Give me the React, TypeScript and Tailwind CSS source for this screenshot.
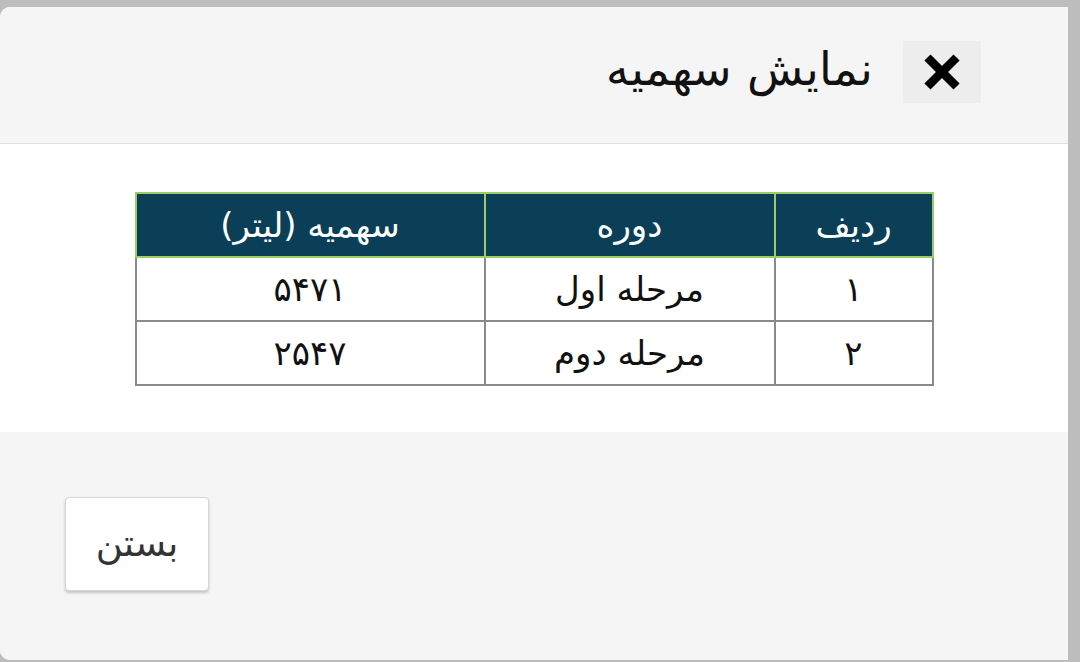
import { X } from "lucide-react";

const rows = [
  { id: "۱", period: "مرحله اول", quota: "۵۴۷۱" },
  { id: "۲", period: "مرحله دوم", quota: "۲۵۴۷" },
];

const font = { fontFamily: '"DejaVu Sans", "Noto Sans", sans-serif' };

export default function App() {
  return (
    <div
      dir="rtl"
      className="h-[662px] w-[1080px] bg-[#bdbdbd] pt-[7px] pr-[12px] pb-[2px]"
      style={font}
    >
      <div className="flex h-full flex-col overflow-hidden rounded-l-[10px] bg-white">
        {/* Header */}
        <div className="flex h-[137px] shrink-0 items-center gap-[30px] border-b border-[#e0e0e0] bg-[#f5f5f5] pr-[87px] pb-[6px]">
          <button className="flex h-[62px] w-[78px] items-center justify-center bg-[#ededed]">
            <X size={46} strokeWidth={4.5} strokeLinecap="square" className="text-black" />
          </button>
          <h1 className="pb-[6px] text-[46px] leading-none font-light text-[#111]">نمایش سهمیه</h1>
        </div>

        {/* Body */}
        <div className="flex h-[288px] shrink-0 justify-center bg-white pt-[48px]">
          <table className="h-[192px] w-[799px] border-collapse text-[34px] text-[#111]">
            <thead>
              <tr className="h-[64px] bg-[#0a3f57] text-white">
                <th className="w-[158px] border-2 border-[#9ccc65] font-normal">ردیف</th>
                <th className="w-[290px] border-2 border-[#9ccc65] font-normal">دوره</th>
                <th className="border-2 border-[#9ccc65] font-normal">سهمیه (لیتر)</th>
              </tr>
            </thead>
            <tbody>
              {rows.map((r) => (
                <tr key={r.id} className="h-[64px]">
                  <td className="border-2 border-[#8a8a8a] text-center">{r.id}</td>
                  <td className="border-2 border-[#8a8a8a] text-center">{r.period}</td>
                  <td className="border-2 border-[#8a8a8a] text-center">{r.quota}</td>
                </tr>
              ))}
            </tbody>
          </table>
        </div>

        {/* Footer */}
        <div className="flex flex-1 items-center justify-end bg-[#f5f5f5] pl-[65px] pb-[4px]">
          <button className="flex h-[94px] w-[144px] items-center justify-center rounded-[4px] border border-[#d6d6d6] bg-white text-[37px] text-[#333] shadow-[0_2px_3px_rgba(0,0,0,0.2)]">
            بستن
          </button>
        </div>
      </div>
    </div>
  );
}
